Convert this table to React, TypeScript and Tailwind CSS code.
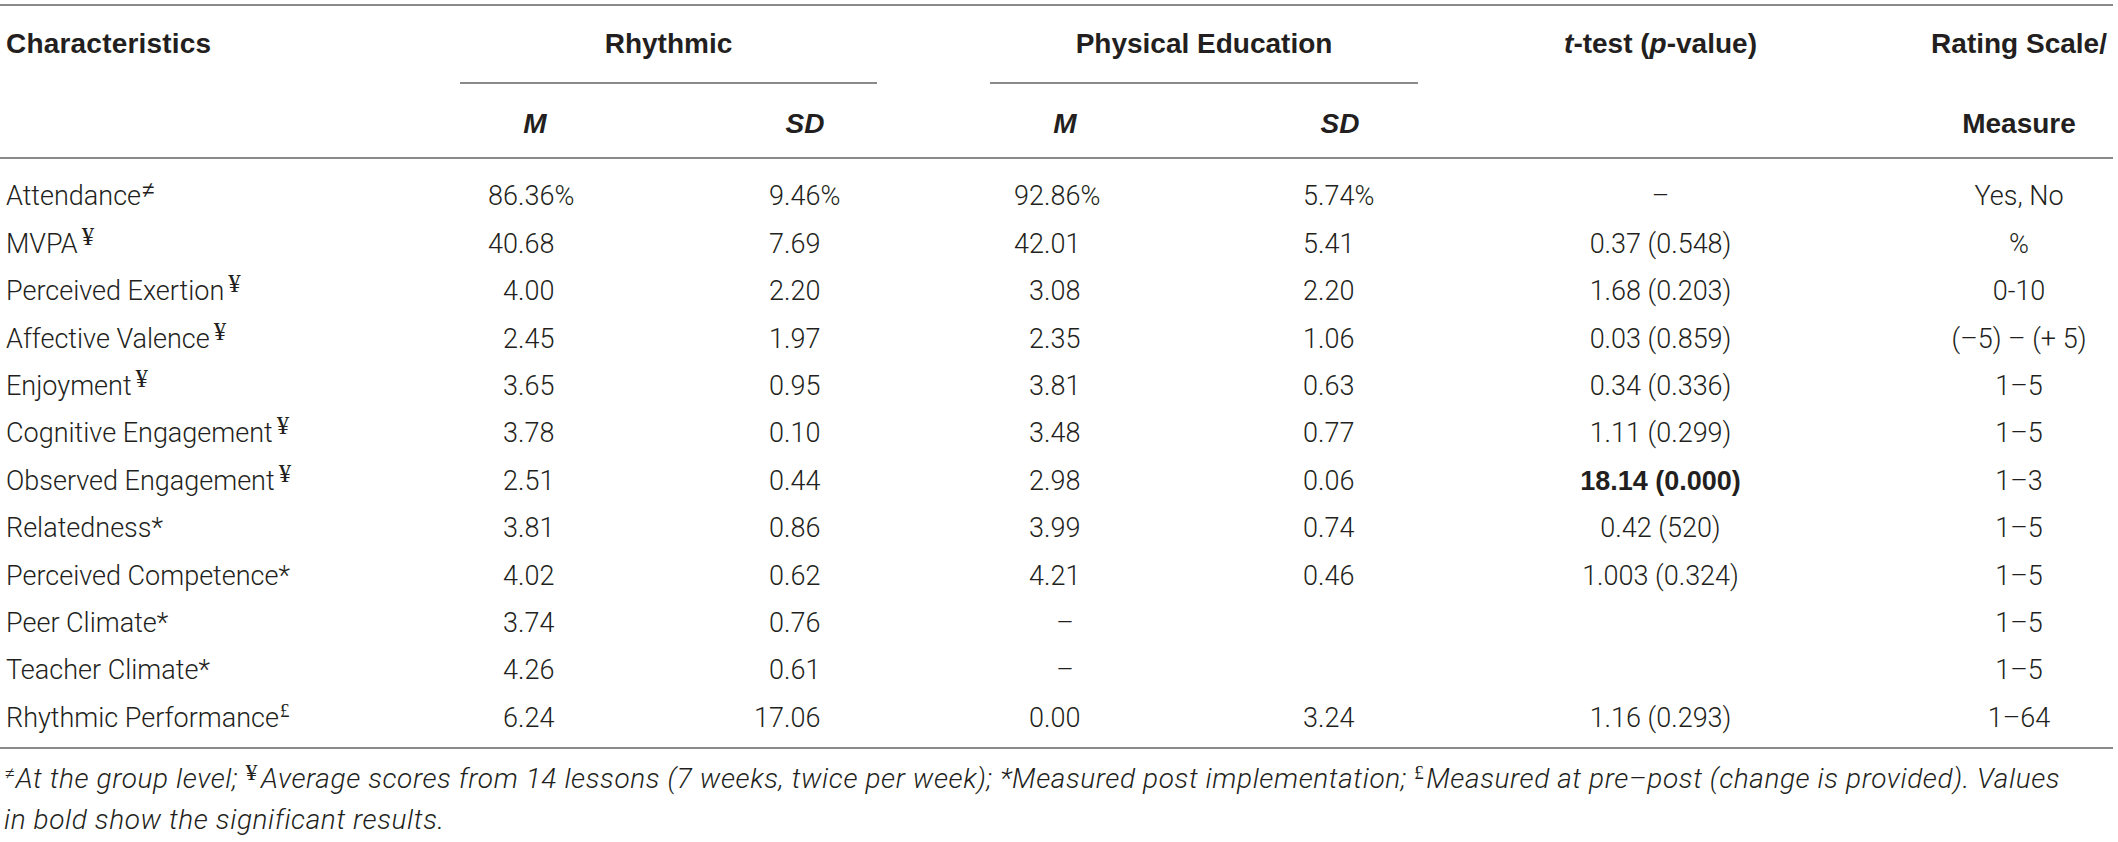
import type { ReactNode } from 'react';

type MarkKind = 'ne' | 'yen' | 'star' | 'pound';

interface Row {
  label: string;
  mark: MarkKind;
  rM: string;
  rSD: string;
  peM: string;
  peSD: string;
  t: string;
  tBold?: boolean;
  scale: string;
}

const rows: Row[] = [
  { label: 'Attendance', mark: 'ne', rM: '86.36%', rSD: '9.46%', peM: '92.86%', peSD: '5.74%', t: '–', scale: 'Yes, No' },
  { label: 'MVPA', mark: 'yen', rM: '40.68', rSD: '7.69', peM: '42.01', peSD: '5.41', t: '0.37 (0.548)', scale: '%' },
  { label: 'Perceived Exertion', mark: 'yen', rM: '4.00', rSD: '2.20', peM: '3.08', peSD: '2.20', t: '1.68 (0.203)', scale: '0-10' },
  { label: 'Affective Valence', mark: 'yen', rM: '2.45', rSD: '1.97', peM: '2.35', peSD: '1.06', t: '0.03 (0.859)', scale: '(–5) – (+ 5)' },
  { label: 'Enjoyment', mark: 'yen', rM: '3.65', rSD: '0.95', peM: '3.81', peSD: '0.63', t: '0.34 (0.336)', scale: '1–5' },
  { label: 'Cognitive Engagement', mark: 'yen', rM: '3.78', rSD: '0.10', peM: '3.48', peSD: '0.77', t: '1.11 (0.299)', scale: '1–5' },
  { label: 'Observed Engagement', mark: 'yen', rM: '2.51', rSD: '0.44', peM: '2.98', peSD: '0.06', t: '18.14 (0.000)', tBold: true, scale: '1–3' },
  { label: 'Relatedness', mark: 'star', rM: '3.81', rSD: '0.86', peM: '3.99', peSD: '0.74', t: '0.42 (520)', scale: '1–5' },
  { label: 'Perceived Competence', mark: 'star', rM: '4.02', rSD: '0.62', peM: '4.21', peSD: '0.46', t: '1.003 (0.324)', scale: '1–5' },
  { label: 'Peer Climate', mark: 'star', rM: '3.74', rSD: '0.76', peM: '–', peSD: '', t: '', scale: '1–5' },
  { label: 'Teacher Climate', mark: 'star', rM: '4.26', rSD: '0.61', peM: '–', peSD: '', t: '', scale: '1–5' },
  { label: 'Rhythmic Performance', mark: 'pound', rM: '6.24', rSD: '17.06', peM: '0.00', peSD: '3.24', t: '1.16 (0.293)', scale: '1–64' },
];

// left padding per numeric column so the decimal points line up
const numPad = ['pl-[58px]', 'pl-[54px]', 'pl-[44px]', 'pl-[68px]'];

function Mark({ kind }: { kind: MarkKind }) {
  if (kind === 'ne')
    return <span className="relative -top-[8px] ml-[1px] text-[22px] font-['Liberation_Sans',sans-serif]">≠</span>;
  if (kind === 'yen')
    return <span className="relative -top-[8px] ml-[4px] text-[25px] font-['Liberation_Serif',serif]">¥</span>;
  if (kind === 'pound')
    return <span className="relative -top-[10px] ml-[1px] text-[19px] font-['Liberation_Serif',serif]">£</span>;
  return <span>*</span>;
}

function Num({ value, pad }: { value: string; pad: string }) {
  if (!value) return null;
  if (value === '–') return <div className="text-center">–</div>;
  const i = value.indexOf('.');
  return (
    <div className={`flex ${pad}`}>
      <span className="w-[60px] shrink-0 text-right">{value.slice(0, i)}</span>
      <span>{value.slice(i)}</span>
    </div>
  );
}

function Cell({ children, className = '' }: { children?: ReactNode; className?: string }) {
  return (
    <td className="p-0">
      <div className={`flex h-[47.4px] flex-col justify-center ${className}`}>{children}</div>
    </td>
  );
}

function GroupHead({ label, inset }: { label: string; inset: string }) {
  return (
    <th colSpan={2} className="p-0 align-top">
      <div className={`flex h-[78px] flex-col ${inset}`}>
        <div className="flex flex-1 items-center justify-center">{label}</div>
        <div className="h-[2px] bg-[#8a8a8a]" />
      </div>
    </th>
  );
}

export default function App() {
  return (
    <div className="min-h-[842px] w-[2118px] bg-white pt-[4px] text-[#231f20]">
      <table className="w-[2113px] table-fixed border-collapse">
        <colgroup>
          <col className="w-[400px]" />
          <col className="w-[270px]" />
          <col className="w-[270px]" />
          <col className="w-[250px]" />
          <col className="w-[300px]" />
          <col className="w-[435px]" />
          <col className="w-[188px]" />
        </colgroup>

        <thead className="font-['Liberation_Sans',Arial,sans-serif] text-[28px] font-bold">
          <tr className="border-t-2 border-[#8a8a8a]">
            <th className="p-0 align-top">
              <div className="flex h-[76px] items-center pl-[6px] text-left tracking-[0.2px]">Characteristics</div>
            </th>
            <GroupHead label="Rhythmic" inset="ml-[60px] mr-[63px]" />
            <GroupHead label="Physical Education" inset="ml-[50px] mr-[72px]" />
            <th className="p-0 align-top">
              <div className="flex h-[76px] items-center justify-center pr-[94px]">
                <span>
                  <i>t</i>-test (<i>p</i>-value)
                </span>
              </div>
            </th>
            <th className="p-0 align-top">
              <div className="flex h-[76px] items-center justify-center whitespace-nowrap">Rating Scale/</div>
            </th>
          </tr>
          <tr className="border-b-2 border-[#8a8a8a]">
            <th className="p-0" />
            {['M', 'SD', 'M', 'SD'].map((h, i) => (
              <th key={i} className="p-0">
                <div className="flex h-[73px] items-center justify-center pt-[6px] italic">{h}</div>
              </th>
            ))}
            <th className="p-0" />
            <th className="p-0">
              <div className="flex h-[73px] items-center justify-center pt-[6px]">Measure</div>
            </th>
          </tr>
        </thead>

        <tbody className="font-['Roboto','Liberation_Sans',sans-serif] text-[27px] font-light">
          <tr aria-hidden="true">
            <td colSpan={7} className="h-[15px] p-0" />
          </tr>
          {rows.map((r) => (
            <tr key={r.label}>
              <Cell className="pl-[6px] whitespace-nowrap">
                <span>
                  {r.label}
                  <Mark kind={r.mark} />
                </span>
              </Cell>
              <Cell>
                <Num value={r.rM} pad={numPad[0]} />
              </Cell>
              <Cell>
                <Num value={r.rSD} pad={numPad[1]} />
              </Cell>
              <Cell>
                <Num value={r.peM} pad={numPad[2]} />
              </Cell>
              <Cell>
                <Num value={r.peSD} pad={numPad[3]} />
              </Cell>
              <Cell className="items-center pr-[94px]">
                <span className={r.tBold ? "font-['Liberation_Sans',sans-serif] font-bold" : ''}>{r.t}</span>
              </Cell>
              <Cell className="items-center whitespace-nowrap">{r.scale}</Cell>
            </tr>
          ))}
          <tr aria-hidden="true" className="border-b-2 border-[#8a8a8a]">
            <td colSpan={7} className="h-[6px] p-0" />
          </tr>
        </tbody>
      </table>

      <p className="w-[2113px] whitespace-nowrap pl-[4px] pt-[11px] font-['Roboto','Liberation_Sans',sans-serif] text-[28px] leading-[38px] font-light italic tracking-[0.6px]">
        <span className="relative -top-[8px] text-[20px] not-italic">≠</span>At the group level;{' '}
        <span className="relative -top-[8px] mr-[3px] text-[24px] not-italic font-['Liberation_Serif',serif]">¥</span>Average
        scores from 14 lessons (7 weeks, twice per week); *Measured post implementation;{' '}
        <span className="relative -top-[9px] mr-[2px] text-[19px] not-italic font-['Liberation_Serif',serif]">£</span>Measured at
        pre–post (change is provided). Values
        <br />
        in bold show the significant results.
      </p>
    </div>
  );
}
